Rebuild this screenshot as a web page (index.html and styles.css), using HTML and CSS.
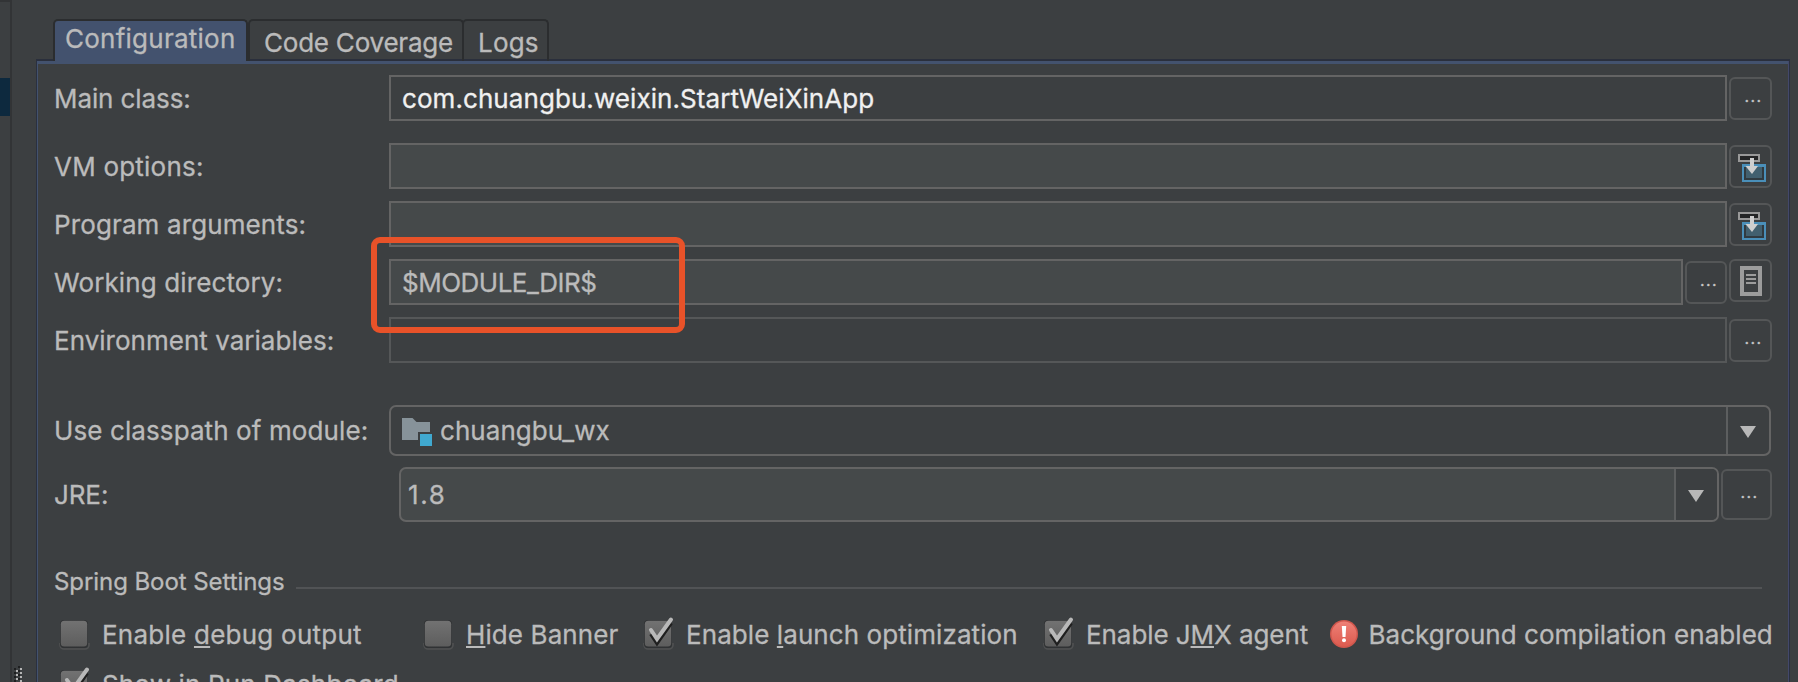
FILE: index.html
```html
<!DOCTYPE html>
<html lang="en">
<head>
<meta charset="utf-8">
<title>Run Configuration</title>
<link rel="stylesheet" href="styles.css">
</head>
<body>
<svg class="defs" width="0" height="0" aria-hidden="true">
  <defs>
    <linearGradient id="boxFill" x1="0" y1="0" x2="0" y2="1"><stop offset="0" stop-color="#727272"/><stop offset="1" stop-color="#5d5d5d"/></linearGradient>
    <linearGradient id="alertFill" x1="0" y1="0" x2="0" y2="1"><stop offset="0" stop-color="#ee8076"/><stop offset="1" stop-color="#dc5b4f"/></linearGradient>
    <symbol id="box" viewBox="0 0 32 36">
      <path d="M1 27v2a4 4 0 0 0 4 4h21a4 4 0 0 0 4-4v-2" fill="none" stroke="#505152" stroke-width="1.6"/>
      <rect x="1" y="4" width="28" height="28" rx="4" fill="#303234"/>
      <rect x="1.8" y="4.8" width="26.4" height="25.8" rx="3.5" fill="url(#boxFill)"/>
    </symbol>
    <symbol id="box-on" viewBox="0 0 32 36">
      <use href="#box" width="32" height="36"/>
      <path d="M8 18l6 9L28 7" fill="none" stroke="#1f1f1f" stroke-width="4"/>
      <path d="M8 14l6 9L28 3.500" fill="none" stroke="#b8b8b8" stroke-width="4" stroke-linecap="round"/>
    </symbol>
    <symbol id="insert" viewBox="0 0 28 28">
      <rect x="1" y="1" width="20" height="6" fill="#242526" stroke="#999" stroke-width="2"/>
      <rect x="5" y="11" width="22" height="16" fill="#313b41" stroke="#4a8fb9" stroke-width="2"/>
      <path d="M4 10h24v3H4z" fill="#4a8fb9"/>
      <path d="M8 13h16v11H8z" fill="#42606f"/>
      <path d="M12 4h4v8h4l-6 8-6.500-8H12z" fill="#cfcfcf"/>
    </symbol>
  </defs>
</svg>

<aside class="tree"><div class="tree-top"></div><div class="tree-selected"></div></aside>
<svg class="grip" width="8" height="16" viewBox="0 0 8 16"><path d="M4 0h2v2H4zM0 2h2v2H0zM4 4h2v2H4zM0 6h2v2H0zM4 8h2v2H4zM0 10h2v2H0zM4 12h2v2H4zM0 14h2v2H0z" fill="#1e1f20"/><path d="M6 2h2v2H6zM2 4h2v2H2zM6 6h2v2H6zM2 8h2v2H2zM6 10h2v2H6zM2 12h2v2H2zM6 14h2v2H6z" fill="#b5b5b5"/></svg>

<main class="main">
  <nav class="tabs">
    <div class="tab tab-active">Configuration</div>
    <div class="tab tab-coverage">Code Coverage</div>
    <div class="tab tab-logs">Logs</div>
  </nav>
  <section class="panel">
    <div class="row row-main">
      <label class="label ls-0">Main class:</label>
      <div class="field field-plain">com.chuangbu.weixin.StartWeiXinApp</div>
      <button class="btn">...</button>
    </div>
    <div class="row">
      <label class="label ls-vm">VM options:</label>
      <div class="field"></div>
      <button class="btn btn-icon"><svg width="28" height="28"><use href="#insert"/></svg></button>
    </div>
    <div class="row">
      <label class="label">Program arguments:</label>
      <div class="field"></div>
      <button class="btn btn-icon"><svg width="28" height="28"><use href="#insert"/></svg></button>
    </div>
    <div class="row">
      <label class="label">Working directory:</label>
      <div class="field field-dir">$MODULE_DIR$</div>
      <button class="btn btn-narrow">...</button>
      <button class="btn btn-page"><svg width="22" height="30" viewBox="0 0 22 30"><rect x="2" y="2" width="18" height="26" fill="#3c3f41" stroke="#9c9c9c" stroke-width="4"/><path d="M6 9h10M6 13h10M6 17h10" stroke="#9c9c9c" stroke-width="2"/></svg></button>
    </div>
    <div class="row row-env">
      <label class="label ls-env">Environment variables:</label>
      <div class="field field-disabled"></div>
      <button class="btn">...</button>
    </div>
    <div class="row row-module">
      <label class="label ls-module">Use classpath of module:</label>
      <div class="combo">
        <div class="combo-value"><svg class="folder" width="30" height="28" viewBox="0 0 30 28"><path d="M0 0h10.500l4 4H28v10H16v8H0z" fill="#87939a"/><path d="M18 16h12v12H18z" fill="#40a9d0"/></svg><span class="module-name">chuangbu_wx</span></div>
        <div class="combo-arrow"><svg width="16" height="12" viewBox="0 0 16 12"><path d="M0 0h16L8 12z" fill="#b8b8b8"/></svg></div>
      </div>
    </div>
    <div class="row row-jre">
      <label class="label ls-0">JRE:</label>
      <div class="combo combo-jre">
        <div class="combo-value jre-value">1.8</div>
        <div class="combo-arrow"><svg width="16" height="12" viewBox="0 0 16 12"><path d="M0 0h16L8 12z" fill="#b8b8b8"/></svg></div>
      </div>
      <button class="btn btn-jre">...</button>
    </div>
    <div class="section-title"><span>Spring Boot Settings</span><i class="rule"></i></div>
    <div class="checks">
      <label class="check ls-debug"><svg width="32" height="36"><use href="#box"/></svg><span>Enable <u>d</u>ebug output</span></label>
      <label class="check check-banner"><svg width="32" height="36"><use href="#box"/></svg><span><u>H</u>ide Banner</span></label>
      <label class="check ls-launch"><svg width="32" height="36"><use href="#box-on"/></svg><span>Enable <u>l</u>aunch optimization</span></label>
      <label class="check ls-0"><svg width="32" height="36"><use href="#box-on"/></svg><span>Enable J<u>M</u>X agent</span></label>
      <div class="check alert"><svg width="28" height="28" viewBox="0 0 28 28"><circle cx="14" cy="14" r="14" fill="#d0574d"/><circle cx="14" cy="14" r="12.500" fill="url(#alertFill)"/><path d="M11.800 6h4.400l-.7 11h-3z" fill="#fff"/><circle cx="14" cy="20.300" r="2" fill="#fff"/></svg><span>Background compilation enabled</span></div>
      <label class="check"><svg width="32" height="36"><use href="#box-on"/></svg><span>Show in Run Dashboard</span></label>
    </div>
  </section>
</main>
<div class="highlight"></div>
</body>
</html>
```
FILE: styles.css
```css
* { box-sizing: border-box; }

body {
  margin: 0;
  width: 1798px;
  height: 682px;
  overflow: hidden;
  display: flex;
  position: relative;
  background: #3c3f41;
  color: #bbbbbb;
  font-family: Inter, "Liberation Sans", sans-serif;
  font-size: 26px;
  line-height: 32px;
  letter-spacing: 0.15px;
  white-space: nowrap;
  -webkit-text-stroke: 0.3px;
}

.defs { position: absolute; }

.tree {
  width: 12px;
  flex: none;
  border-right: 2px solid #323436;
}
.tree-top { height: 2px; background: #323436; }
.tree-selected { margin-top: 76px; height: 38px; background: #0d293e; }

.grip { position: absolute; left: 14px; top: 666px; }

.main {
  flex: 1;
  min-width: 0;
  padding: 19px 8px 0 24px;
}

.tabs { display: flex; padding-left: 17px; height: 40px; }
.tab {
  height: 42px;
  border: 2px solid #2b2d2f;
  border-bottom: 0;
  border-radius: 5px 5px 0 0;
  padding-top: 6px;
}
.tab-active {
  position: relative;
  z-index: 1;
  width: 195px;
  padding: 2px 0 0 10px;
  background: #43526e;
  letter-spacing: 0.25px;
}
.tab-coverage { width: 216px; padding-left: 14px; letter-spacing: -0.22px; }
.tab-logs { width: 87px; margin-left: -2px; padding-left: 14px; letter-spacing: 0.2px; }

.panel {
  height: 640px;
  border: 1px solid #2a3040;
  border-top: 2px solid #2a2f3c;
  box-shadow: inset 1px 0 #43526e, inset -1px 0 #43486a, inset 0 3px #43526e;
  padding: 14px 17px 0 17px;
}

.row { display: flex; gap: 2px; margin-bottom: 12px; align-items: flex-start; }
.row-main { margin-bottom: 22px; }

.label { width: 333px; flex: none; line-height: 48px; height: 46px; letter-spacing: 0.12px; }
.label.ls-0 { letter-spacing: -0.1px; }
.label.ls-vm { letter-spacing: 0.22px; }
.label.ls-env { letter-spacing: 0.02px; }
.label.ls-module { letter-spacing: 0.1px; }
.ls-0 { letter-spacing: -0.07px; }

.field {
  flex: 1;
  height: 46px;
  border: 2px solid #646464;
  background: #45494a;
  line-height: 44px;
  padding-left: 11px;
}
.field-plain { background: none; color: #f0f0f0; letter-spacing: 0.07px; }
.field-dir { letter-spacing: -0.5px; }
.field-disabled { background: none; border-color: #555758; }

.btn {
  width: 43px;
  height: 43px;
  flex: none;
  margin: 2px 0 0;
  padding: 0 0 4px 6px;
  border: 2px solid #545657;
  border-radius: 6px;
  background: none;
  color: #c8c8c8;
  font: 16px/35px Inter, "Liberation Sans", sans-serif;
  letter-spacing: 1.4px;
}
.btn-narrow { width: 42px; }
.btn-icon { padding: 3px 0 0 2px; }
.btn-page { margin-top: 0; padding: 1px 0 0; }
.btn svg, .combo svg { display: block; margin: 0 auto; }

.row-env { margin-bottom: 42px; }

.combo {
  flex: 1;
  display: flex;
  height: 51px;
  margin-right: 1px;
  border: 2px solid #646464;
  border-radius: 7px;
}
.combo-value { flex: 1; display: flex; align-items: center; padding-left: 11px; }
.combo-value .folder { margin: 2px 8px 0 0; }
.module-name { letter-spacing: 0.05px; }
.combo-arrow {
  width: 43px;
  border-left: 2px solid #5c5e5f;
  display: flex;
  align-items: center;
  padding-top: 2px;
}
.combo-arrow svg { transform: translateX(-1px); }

.row-module { margin-bottom: 11px; }
.row-module .label { line-height: 52px; height: 51px; }
.row-jre { margin-bottom: 42px; }
.row-jre .label { line-height: 55px; height: 55px; }
.combo-jre { height: 55px; margin: 0 0 0 10px; background: #45494a; overflow: hidden; }
.jre-value { padding-left: 7px; letter-spacing: 1.6px; }
.combo-jre .combo-arrow { background: #3c3f41; padding-top: 2px; }
.btn-jre { width: 51px; height: 51px; line-height: 41px; }

.section-title {
  display: flex;
  height: 36px;
  font-size: 24px;
  line-height: 36px;
  letter-spacing: -0.07px;
}
.rule { width: 1466px; height: 2px; margin: 23px 0 0 11px; background: #515355; }

.checks {
  display: grid;
  grid-template-columns: 364px 220px 400px 285.5px auto;
  grid-auto-rows: 50px;
  margin-top: 9px;
  padding-left: 5px;
}
.check { display: flex; align-items: center; gap: 11px; }
.check svg { flex: none; margin-top: -1px; }
.check span { padding-top: 2px; }
.ls-debug { letter-spacing: 0.24px; }
.ls-launch { letter-spacing: 0.08px; }
.check-banner { letter-spacing: 0.1px; }
.alert { letter-spacing: 0.05px; padding-left: 1px; }
u { text-decoration-thickness: 2px; text-underline-offset: 2px; text-decoration-skip-ink: none; }

.highlight {
  position: absolute;
  left: 371px;
  top: 237px;
  width: 314px;
  height: 96px;
  border: 6px solid #e85229;
  border-radius: 9px;
}
```
